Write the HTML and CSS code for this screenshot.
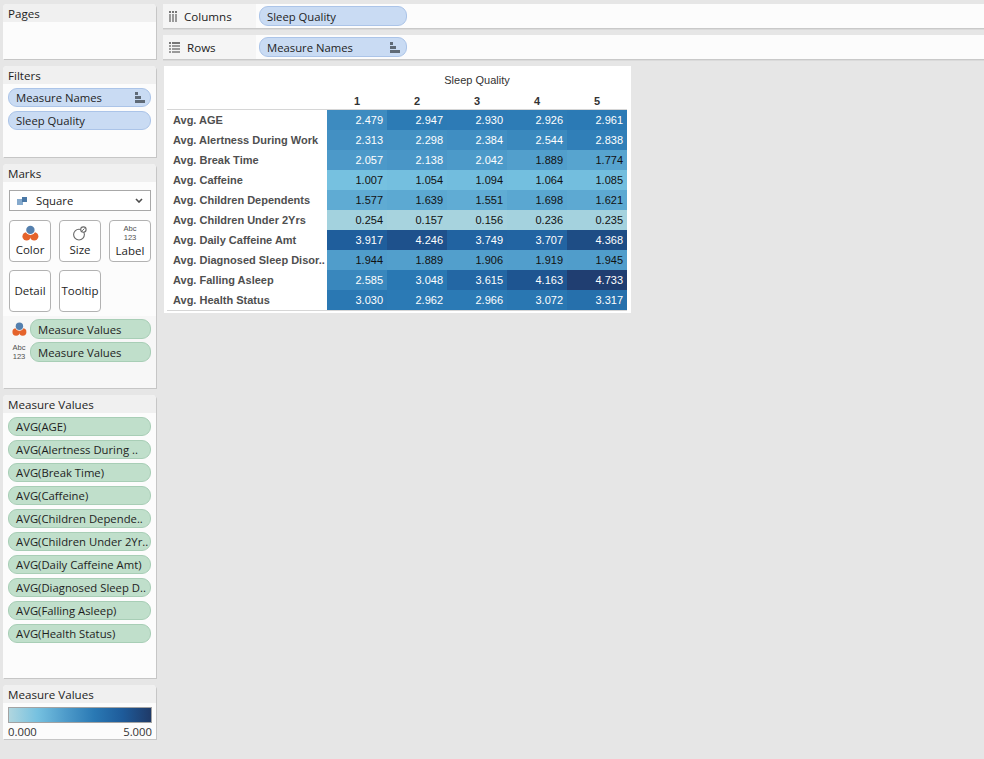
FILE: index.html
```html
<!DOCTYPE html>
<html>
<head>
<meta charset="utf-8">
<link rel="stylesheet" href="styles.css">
</head>
<body>
<div class="app">
  <aside class="side">
    <section class="card pages">
      <div class="card-h">Pages</div>
    </section>

    <section class="card filters">
      <div class="card-h">Filters</div>
      <div class="card-b list">
        <div class="pill blue">Measure Names
          <svg class="sort" width="10" height="11" viewBox="0 0 10 11"><rect x="0" y="0" width="3" height="3" fill="#5f6a76"/><rect x="0" y="4" width="6" height="3" fill="#5f6a76"/><rect x="0" y="8" width="10" height="3" fill="#5f6a76"/></svg>
        </div>
        <div class="pill blue">Sleep Quality</div>
      </div>
    </section>

    <section class="card marks">
      <div class="card-h">Marks</div>
      <div class="marks-top">
        <div class="select">
          <svg class="sq-ic" width="10" height="8" viewBox="0 0 10 8"><rect x="0" y="2" width="6" height="6" fill="#86aacd"/><rect x="5" y="0" width="5" height="5" fill="#4a78a6"/></svg>
          <span class="select-t">Square</span>
          <svg class="chev" width="8" height="5" viewBox="0 0 8 5"><polyline points="1,1 4,4 7,1" fill="none" stroke="#4d4d4d" stroke-width="1.6"/></svg>
        </div>
        <div class="btns">
          <div class="mbtn">
            <svg width="17" height="16" viewBox="0 0 17 16"><circle cx="4.6" cy="11.4" r="4.2" fill="#e5632b"/><circle cx="12.2" cy="11.4" r="4.2" fill="#e5632b"/><circle cx="8.4" cy="4.9" r="5" fill="#fff"/><circle cx="8.4" cy="4.9" r="4.2" fill="#5580ae"/></svg>
            <span>Color</span>
          </div>
          <div class="mbtn">
            <svg width="16" height="16" viewBox="0 0 16 16"><circle cx="7" cy="9.6" r="5.4" fill="none" stroke="#6a6a6a" stroke-width="1.1"/><circle cx="11.4" cy="4.6" r="2.7" fill="#fff" stroke="#6a6a6a" stroke-width="1.1"/><line x1="10.2" y1="5.8" x2="12.5" y2="3.5" stroke="#6a6a6a" stroke-width="1"/></svg>
            <span>Size</span>
          </div>
          <div class="mbtn">
            <span class="abc"><span class="abc-l">Abc</span><span class="abc-l">123</span></span>
            <span>Label</span>
          </div>
          <div class="mbtn"><span>Detail</span></div>
          <div class="mbtn"><span>Tooltip</span></div>
        </div>
      </div>
      <div class="marks-fields">
        <div class="field">
          <span class="field-ic">
            <svg width="15" height="14" viewBox="0 0 17 16"><circle cx="4.6" cy="11.4" r="4.2" fill="#e5632b"/><circle cx="12.2" cy="11.4" r="4.2" fill="#e5632b"/><circle cx="8.4" cy="4.9" r="5" fill="#f7f7f7"/><circle cx="8.4" cy="4.9" r="4.2" fill="#5580ae"/></svg>
          </span>
          <div class="pill green">Measure Values</div>
        </div>
        <div class="field">
          <span class="field-ic"><span class="abc"><span class="abc-l">Abc</span><span class="abc-l">123</span></span></span>
          <div class="pill green">Measure Values</div>
        </div>
      </div>
    </section>

    <section class="card mvals">
      <div class="card-h">Measure Values</div>
      <div class="card-b list">
        <div class="pill green">AVG(AGE)</div>
        <div class="pill green">AVG(Alertness During ..</div>
        <div class="pill green">AVG(Break Time)</div>
        <div class="pill green">AVG(Caffeine)</div>
        <div class="pill green">AVG(Children Depende..</div>
        <div class="pill green">AVG(Children Under 2Yr..</div>
        <div class="pill green">AVG(Daily Caffeine Amt)</div>
        <div class="pill green">AVG(Diagnosed Sleep D..</div>
        <div class="pill green">AVG(Falling Asleep)</div>
        <div class="pill green">AVG(Health Status)</div>
      </div>
    </section>

    <section class="card legend">
      <div class="card-h">Measure Values</div>
      <div class="legend-b">
        <div class="ramp"></div>
        <div class="ramp-l"><span>0.000</span><span>5.000</span></div>
      </div>
    </section>
  </aside>

  <main class="main">
    <div class="shelf">
      <div class="shelf-l">
        <svg width="8" height="11" viewBox="0 0 8 11"><rect x="0" y="0" width="2" height="2" fill="#777"/><rect x="3" y="0" width="2" height="2" fill="#777"/><rect x="6" y="0" width="2" height="2" fill="#777"/><rect x="0" y="3" width="2" height="8" fill="#9a9a9a"/><rect x="3" y="3" width="2" height="8" fill="#9a9a9a"/><rect x="6" y="3" width="2" height="8" fill="#9a9a9a"/></svg>
        <span>Columns</span>
      </div>
      <div class="pill blue shelf-pill">Sleep Quality</div>
    </div>
    <div class="shelf">
      <div class="shelf-l">
        <svg width="11" height="11" viewBox="0 0 11 11"><rect x="0" y="0" width="2" height="2" fill="#777"/><rect x="3" y="0" width="8" height="2" fill="#777"/><rect x="0" y="3" width="2" height="2" fill="#9a9a9a"/><rect x="3" y="3" width="8" height="2" fill="#9a9a9a"/><rect x="0" y="6" width="2" height="2" fill="#9a9a9a"/><rect x="3" y="6" width="8" height="2" fill="#9a9a9a"/><rect x="0" y="9" width="2" height="2" fill="#9a9a9a"/><rect x="3" y="9" width="8" height="2" fill="#9a9a9a"/></svg>
        <span>Rows</span>
      </div>
      <div class="pill blue shelf-pill">Measure Names
        <svg class="sort" width="10" height="11" viewBox="0 0 10 11"><rect x="0" y="0" width="3" height="3" fill="#5f6a76"/><rect x="0" y="4" width="6" height="3" fill="#5f6a76"/><rect x="0" y="8" width="10" height="3" fill="#5f6a76"/></svg>
      </div>
    </div>

    <div class="viz">
      <div class="viz-title">Sleep Quality</div>
      <div class="grid nums">
        <div></div><div>1</div><div>2</div><div>3</div><div>4</div><div>5</div>
      </div>
      <div class="grid body">
        <div class="rl">Avg. AGE</div>
        <div class="c w" style="background:#3d8bc0">2.479</div>
        <div class="c w" style="background:#2c7bb5">2.947</div>
        <div class="c w" style="background:#2d7bb6">2.930</div>
        <div class="c w" style="background:#2d7cb6">2.926</div>
        <div class="c w" style="background:#2b7ab5">2.961</div>

        <div class="rl">Avg. Alertness During Work</div>
        <div class="c w" style="background:#4390c3">2.313</div>
        <div class="c w" style="background:#4391c3">2.298</div>
        <div class="c w" style="background:#408ec2">2.384</div>
        <div class="c w" style="background:#3a89be">2.544</div>
        <div class="c w" style="background:#307fb8">2.838</div>

        <div class="rl">Avg. Break Time</div>
        <div class="c w" style="background:#4c99c9">2.057</div>
        <div class="c w" style="background:#4996c7">2.138</div>
        <div class="c w" style="background:#4c9ac9">2.042</div>
        <div class="c" style="background:#529fcc">1.889</div>
        <div class="c" style="background:#57a4cf">1.774</div>

        <div class="rl">Avg. Caffeine</div>
        <div class="c" style="background:#76c1e0">1.007</div>
        <div class="c" style="background:#74bfdf">1.054</div>
        <div class="c" style="background:#72bdde">1.094</div>
        <div class="c" style="background:#73bfdf">1.064</div>
        <div class="c" style="background:#73bede">1.085</div>

        <div class="rl">Avg. Children Dependents</div>
        <div class="c" style="background:#5fabd3">1.577</div>
        <div class="c" style="background:#5ca9d2">1.639</div>
        <div class="c" style="background:#60acd4">1.551</div>
        <div class="c" style="background:#5aa7d1">1.698</div>
        <div class="c" style="background:#5da9d2">1.621</div>

        <div class="rl">Avg. Children Under 2Yrs</div>
        <div class="c" style="background:#a3d2de">0.254</div>
        <div class="c" style="background:#a7d3de">0.157</div>
        <div class="c" style="background:#a7d3de">0.156</div>
        <div class="c" style="background:#a4d2de">0.236</div>
        <div class="c" style="background:#a4d2de">0.235</div>

        <div class="rl">Avg. Daily Caffeine Amt</div>
        <div class="c w" style="background:#1f5e9c">3.917</div>
        <div class="c w" style="background:#1e518c">4.246</div>
        <div class="c w" style="background:#2163a1">3.749</div>
        <div class="c w" style="background:#2264a2">3.707</div>
        <div class="c w" style="background:#1e4d85">4.368</div>

        <div class="rl">Avg. Diagnosed Sleep Disor..</div>
        <div class="c" style="background:#509dcb">1.944</div>
        <div class="c" style="background:#529fcc">1.889</div>
        <div class="c" style="background:#529fcc">1.906</div>
        <div class="c" style="background:#519ecc">1.919</div>
        <div class="c" style="background:#509dcb">1.945</div>

        <div class="rl">Avg. Falling Asleep</div>
        <div class="c w" style="background:#3987bd">2.585</div>
        <div class="c w" style="background:#2978b3">3.048</div>
        <div class="c w" style="background:#2367a4">3.615</div>
        <div class="c w" style="background:#1e5591">4.163</div>
        <div class="c w" style="background:#203e71">4.733</div>

        <div class="rl">Avg. Health Status</div>
        <div class="c w" style="background:#2a78b3">3.030</div>
        <div class="c w" style="background:#2b7ab5">2.962</div>
        <div class="c w" style="background:#2b7ab5">2.966</div>
        <div class="c w" style="background:#2977b2">3.072</div>
        <div class="c w" style="background:#2670ac">3.317</div>
      </div>
    </div>
  </main>
</div>
</body>
</html>
```

FILE: styles.css
```css
* { box-sizing: border-box; }

body {
  margin: 0;
  background: #e6e6e6;
  font-family: "Open Sans", "Noto Sans", sans-serif;
  font-size: 11.3px;
  color: #222;
}

.app {
  display: flex;
  width: 984px;
  height: 759px;
  overflow: hidden;
}

/* ---------- left side ---------- */
.side {
  flex: none;
  width: 156px;
  padding: 4px 0 0 3px;
  display: flex;
  flex-direction: column;
  gap: 7px;
}

.card {
  width: 153px;
  background: #fcfcfc;
  border-radius: 4px 4px 0 0;
  box-shadow: 1px 1px 0 #c6c6c6;
}

.card-h {
  height: 18px;
  line-height: 19px;
  padding-left: 5px;
  background: #f0f0f0;
  border-radius: 4px 4px 0 0;
  font-size: 11.6px;
  color: #1e1e1e;
}

.pages { height: 55px; }
.filters { height: 91px; }
.marks { height: 224px; display: flex; flex-direction: column; }
.mvals { height: 283px; }
.legend { height: 54px; }

.list {
  padding: 4px 5px 0 5px;
  display: flex;
  flex-direction: column;
  gap: 4px;
}

.pill {
  position: relative;
  height: 19px;
  border: 1px solid;
  border-radius: 9px;
  padding-left: 7px;
  display: flex;
  align-items: center;
  white-space: nowrap;
  overflow: hidden;
  color: #1e1e1e;
}

.pill.blue { background: #c9dbf3; border-color: #abc4e8; }
.pill.green { background: #c0dfcb; border-color: #a8ceb6; }

.pill .sort {
  position: absolute;
  right: 5px;
  top: 3px;
}

/* marks */
.marks-top { padding: 8px 5px 4px 6px; }

.select {
  height: 21px;
  border: 1px solid #a8a8a8;
  background: #fff;
  display: flex;
  align-items: center;
  padding-left: 7px;
  padding-right: 7px;
}

.sq-ic { flex: none; }
.select-t { margin-left: 9px; flex: 1; }
.chev { flex: none; }

.btns {
  margin-top: 9px;
  display: grid;
  grid-template-columns: repeat(3, 42px);
  grid-auto-rows: 42px;
  gap: 8px;
}

.mbtn {
  border: 1px solid #b2b2b2;
  border-radius: 4px;
  background: #fff;
  display: flex;
  flex-direction: column;
  align-items: center;
  justify-content: center;
  gap: 1px;
  font-size: 11.5px;
  color: #1e1e1e;
}

.mbtn > span { line-height: 16px; }

.abc {
  display: flex;
  flex-direction: column;
  align-items: center;
  font-family: "Liberation Sans", Arial, sans-serif;
  color: #505050;
}

.mbtn > .abc { line-height: 9px; }

.abc-l {
  display: block;
  height: 9px;
  line-height: 9px;
  font-size: 7.6px;
}

.marks-fields {
  flex: 1;
  background: #f7f7f7;
  padding: 3px 5px 0 5px;
  display: flex;
  flex-direction: column;
  gap: 3px;
}

.field { display: flex; align-items: center; }

.field-ic {
  flex: none;
  width: 22px;
  display: flex;
  justify-content: center;
  align-items: center;
}

.field .pill { flex: 1; height: 20px; }

/* legend */
.legend-b { padding: 4px 4px 0 5px; }

.ramp {
  height: 16px;
  border: 1px solid #a3a3a3;
  background: linear-gradient(to right, #b0d6df 0%, #76c1e0 20%, #4e9bca 40%, #2a79b4 60%, #1e5b9a 80%, #1f3a68 100%);
}

.ramp-l {
  margin-top: 2px;
  display: flex;
  justify-content: space-between;
  line-height: 13px;
  color: #333;
}

/* ---------- main ---------- */
.main {
  flex: 1;
  padding: 4px 0 0 7px;
  display: flex;
  flex-direction: column;
  gap: 7px;
}

.shelf {
  height: 24px;
  display: flex;
  align-items: center;
  background: #fcfcfc;
  box-shadow: 0 1px 0 #c9c9c9, 0 2px 0 #dadada;
}

.shelf-l {
  width: 93px;
  height: 100%;
  background: #f5f5f5;
  display: flex;
  align-items: center;
  gap: 7px;
  padding-left: 6px;
  font-size: 11.6px;
}

.shelf-pill {
  margin-left: 3px;
  width: 148px;
  height: 20px;
}

.shelf-pill .sort { right: 6px; top: 4px; }

/* viz */
.viz {
  margin-left: 1px;
  width: 467px;
  height: 247px;
  background: #fff;
  padding: 6px 4px 0 3px;
  font-family: "Liberation Sans", Arial, sans-serif;
  font-size: 11px;
}

.viz-title {
  margin-left: 160px;
  width: 300px;
  text-align: center;
  line-height: 16px;
  color: #333;
}

.grid {
  display: grid;
  grid-template-columns: 160px repeat(5, 60px);
}

.nums {
  margin-top: 5px;
  line-height: 16px;
  font-weight: bold;
  color: #333;
  text-align: center;
  border-bottom: 1px solid #d6d6d6;
}

.body {
  grid-auto-rows: 20px;
  border-bottom: 1px solid #d6d6d6;
}

.rl {
  padding-left: 6px;
  line-height: 20px;
  font-weight: bold;
  color: #4f4f4f;
  white-space: nowrap;
  overflow: hidden;
}

.c {
  line-height: 20px;
  text-align: right;
  padding-right: 4px;
  color: #111;
}

.c.w { color: #fff; }
```
